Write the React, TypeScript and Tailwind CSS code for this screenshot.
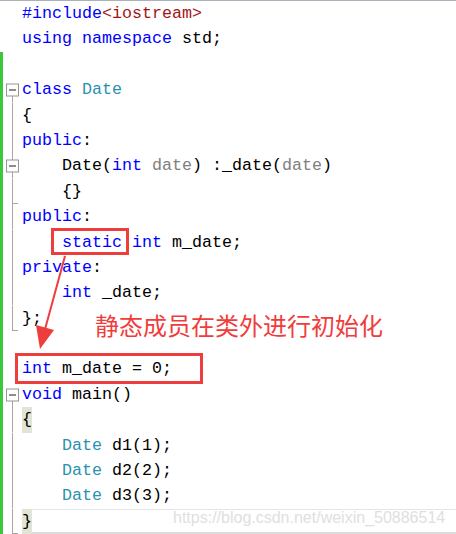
import React from "react";

type Tok = [string, string?];
type Fold = "none" | "box" | "mid" | "line" | "tick" | "end";

interface Line {
  toks: Tok[];
  fold: Fold;
  green: boolean;
  hl?: boolean;
}

const K = "text-[#0000ff]";
const T = "text-[#2b91af]";
const P = "text-[#808080]";
const S = "text-[#a31515]";

const lines: Line[] = [
  { toks: [["#include", K], ["<iostream>", S]], fold: "none", green: false },
  { toks: [["using", K], [" "], ["namespace", K], [" std;"]], fold: "none", green: false },
  { toks: [], fold: "none", green: true },
  { toks: [["class", K], [" "], ["Date", T]], fold: "box", green: true },
  { toks: [["{"]], fold: "line", green: true },
  { toks: [["public", K], [":"]], fold: "line", green: true },
  { toks: [["    Date("], ["int", K], [" "], ["date", P], [") :_date("], ["date", P], [")"]], fold: "mid", green: true },
  { toks: [["    {}"]], fold: "tick", green: true },
  { toks: [["public", K], [":"]], fold: "line", green: true },
  { toks: [["    "], ["static", K], [" "], ["int", K], [" m_date;"]], fold: "line", green: true },
  { toks: [["private", K], [":"]], fold: "line", green: true },
  { toks: [["    "], ["int", K], [" _date;"]], fold: "line", green: true },
  { toks: [["};"]], fold: "end", green: true },
  { toks: [], fold: "none", green: true },
  { toks: [["int", K], [" m_date = 0;"]], fold: "none", green: true },
  { toks: [["void", K], [" main()"]], fold: "box", green: true },
  { toks: [["{", "bg-[#e2e5d5]"]], fold: "line", green: true },
  { toks: [["    "], ["Date", T], [" d1(1);"]], fold: "line", green: true },
  { toks: [["    "], ["Date", T], [" d2(2);"]], fold: "line", green: true },
  { toks: [["    "], ["Date", T], [" d3(3);"]], fold: "line", green: true },
  { toks: [["}", "bg-[#e2e5d5]"]], fold: "end", green: true, hl: true },
];

function FoldMark({ kind }: { kind: Fold }) {
  if (kind === "none") return <div className="w-[19px]" />;
  const x = 9.5;
  return (
    <svg width="19" height="25.4" viewBox="0 0 19 25.4" className="block">
      {(kind === "line" || kind === "tick" || kind === "end") && (
        <line x1={x} y1="0" x2={x} y2="25.4" stroke="#a6a6a6" strokeWidth="1" />
      )}
      {kind === "mid" && (
        <line x1={x} y1="0" x2={x} y2="7" stroke="#a6a6a6" strokeWidth="1" />
      )}
      {(kind === "box" || kind === "mid") && (
        <>
          <line x1={x} y1="19" x2={x} y2="25.4" stroke="#a6a6a6" strokeWidth="1" />
          <rect x="3.5" y="7" width="12" height="12" fill="#fff" stroke="#959595" strokeWidth="1" />
          <line x1="6" y1="13" x2="13" y2="13" stroke="#404040" strokeWidth="1.2" />
        </>
      )}
      {(kind === "tick" || kind === "end") && (
        <line x1={x} y1="24.5" x2="15" y2="24.5" stroke="#a6a6a6" strokeWidth="1" />
      )}
    </svg>
  );
}

export default function App() {
  return (
    <div className="relative w-[456px] h-[534px] overflow-hidden bg-white border-t border-[#a9b1ba] font-['Liberation_Mono',monospace] text-[16.67px] text-black">
      <div className="flex flex-col">
        {lines.map((ln, i) => (
          <div key={i} className="flex h-[25.4px] items-stretch">
            <div className={`w-[3px] ${ln.green ? "bg-[#3cc83c]" : "bg-white"}`} />
            <FoldMark kind={ln.fold} />
            <div
              className={`flex-1 whitespace-pre leading-[25.4px] ${
                ln.hl ? "shadow-[inset_0_1px_0_#e4e4ec,inset_0_-2px_0_#dcdcdc]" : ""
              }`}
            >
              {ln.toks.map((t, j) => (
                <span key={j} className={`inline-block h-[25.4px] whitespace-pre ${t[1] ?? ""}`}>
                  {t[0]}
                </span>
              ))}
            </div>
          </div>
        ))}
      </div>

      <svg className="absolute inset-0 pointer-events-none" width="456" height="534">
        <rect x="52.5" y="228.5" width="75" height="24" fill="none" stroke="#ee3d3d" strokeWidth="3" />
        <rect x="16.5" y="353.5" width="185" height="28" fill="none" stroke="#ee3d3d" strokeWidth="3" />
        <line x1="65" y1="255" x2="44" y2="332" stroke="#ee3d3d" strokeWidth="2" />
        <polygon points="40,348 36,324 54,329" fill="#ee3d3d" />
      </svg>

      <div className="absolute left-[95px] top-[311px] leading-[26px] text-[24px] text-[#f03c3c] font-['Noto_Sans_CJK_SC',sans-serif]">
        静态成员在类外进行初始化
      </div>

      <div className="absolute left-[173px] top-[508px] leading-[18px] text-[16px] text-[#d8d8d8] opacity-80 font-['Liberation_Sans',sans-serif]">
        https://blog.csdn.net/weixin_50886514
      </div>
    </div>
  );
}
